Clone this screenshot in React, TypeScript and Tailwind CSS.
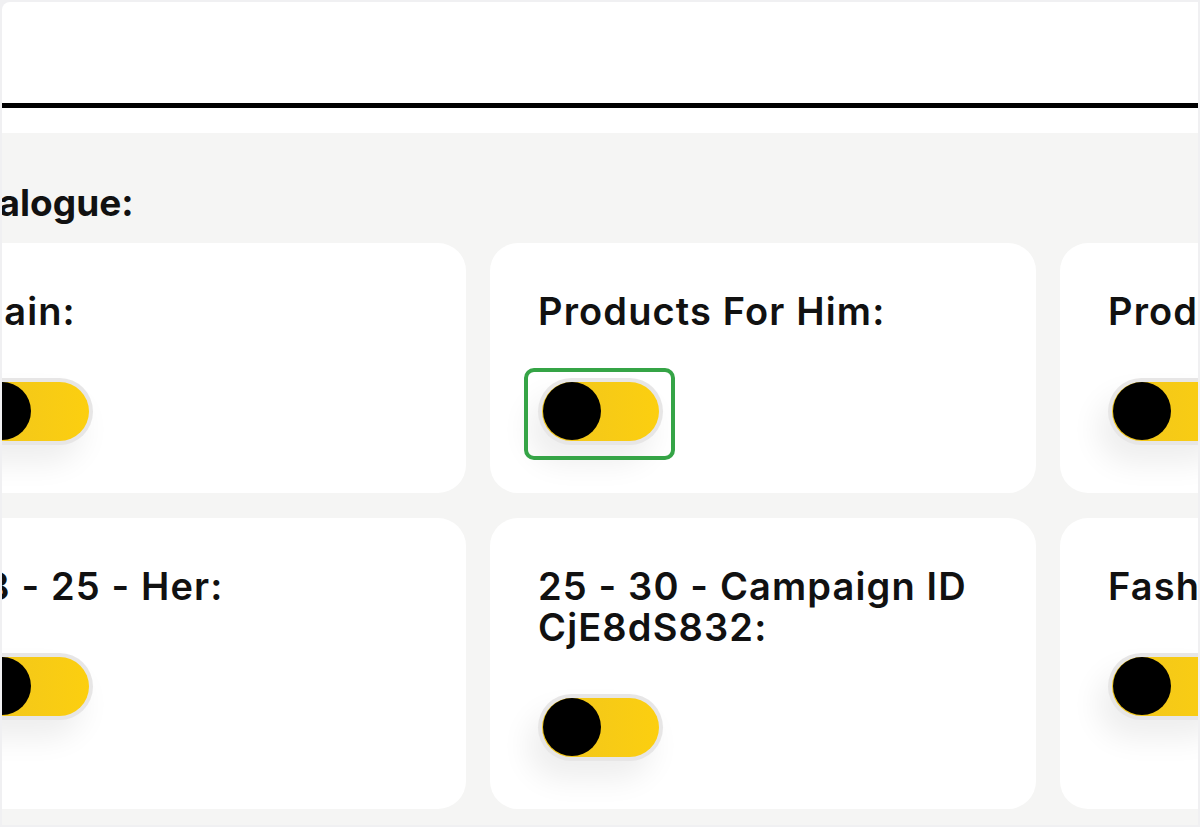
import React from "react";

type Item = { title: string; focused?: boolean };

const items: Item[] = [
  { title: "Main:" },
  { title: "Products For Him:", focused: true },
  { title: "Products For Her:" },
  { title: "18 - 25 - Her:" },
  { title: "25 - 30 - Campaign ID CjE8dS832:" },
  { title: "Fashion Week:" },
];

const Toggle = ({ focused }: { focused?: boolean }) => {
  return (
    <div className="relative w-[125px] h-[67px]">
      <div className="w-[125px] h-[67px] rounded-full bg-[#e7e6e6] p-[4px] shadow-[-10px_18px_30px_rgba(0,0,0,0.07)]">
        <div className="relative w-full h-full rounded-full bg-gradient-to-r from-[#f0c51c] to-[#fccf0f]">
          <div className="absolute left-[1px] top-0 w-[58px] h-[58px] rounded-full bg-black" />
        </div>
      </div>
      {focused && (
        <div className="absolute -left-[14px] -top-[10px] w-[151px] h-[92px] rounded-[10px] border-4 border-[#35a446]" />
      )}
    </div>
  );
};

export default function App() {
  return (
    <div className="w-[1200px] h-[827px] overflow-hidden bg-[#f0f0f2] p-[2px] font-['Inter',sans-serif]">
      <div className="w-full h-full overflow-hidden bg-white rounded-tl-[8px] flex flex-col">
        <div className="h-[101px] shrink-0" />
        <div className="h-[5px] bg-black shrink-0" />
        <div className="h-[25px] shrink-0" />
        <div className="flex-1 bg-[#f5f5f4] pt-[49px]">
          <div className="ml-[-82px]">
            <h2 className="pl-[16px] text-[37px] leading-[41px] font-bold text-[#111]">Catalogue:</h2>
            <div className="mt-[20px] grid grid-cols-[546px_546px_546px] gap-x-6 gap-y-[25px]">
              {items.map((it) => (
                <div key={it.title} className="bg-white rounded-[28px] p-12 flex flex-col gap-[46px]">
                  <p className="text-[38px] leading-[41px] tracking-[0.03em] font-semibold text-[#111]">{it.title}</p>
                  <Toggle focused={it.focused} />
                </div>
              ))}
            </div>
          </div>
        </div>
      </div>
    </div>
  );
}
